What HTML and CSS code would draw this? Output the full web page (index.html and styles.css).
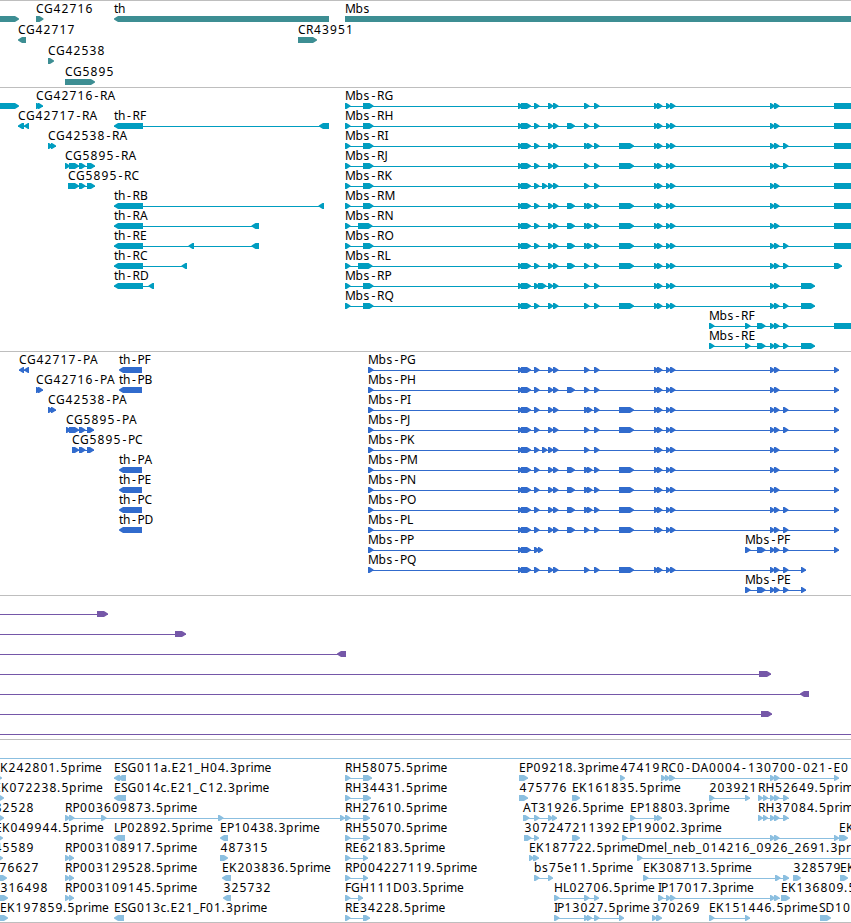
FILE: index.html
```html
<!DOCTYPE html>
<html lang="en">

<head>
    <meta charset="UTF-8">
    <meta name="viewport" content="width=device-width, initial-scale=1.0">
    <title>Genome browser - Mbs / th region</title>
    <link rel="stylesheet" href="styles.css">
</head>

<body>
    <main class="browser">
        <section class="track track-gene" id="gene"></section>
        <section class="track track-rna" id="rna"></section>
        <section class="track track-protein" id="protein"></section>
        <section class="track track-clone" id="clone"></section>
        <section class="track track-est" id="est"></section>
    </main>
    <script src="script.js"></script>
</body>

</html>
```

FILE: styles.css
```css
* {
    box-sizing: border-box;
    margin: 0;
    padding: 0;
}

body {
    background-color: #fff;
    overflow: hidden;
}

.browser {
    display: flex;
    flex-direction: column;
    width: 851px;
    height: 923px;
    border-bottom: 1px solid #bebebe;
}

.track {
    border-top: 1px solid #bebebe;
    overflow: hidden;
}

.track svg {
    display: block;
    width: 100%;
    height: 100%;
}

.track-gene {
    height: 87px;
    color: #3d8e93;
}

.track-rna {
    height: 264px;
    color: #009dc0;
}

.track-protein {
    height: 244px;
    color: #316bcd;
}

.track-clone {
    height: 144px;
    color: #7557a8;
}

.track-est {
    height: 183px;
    color: #8bbfe0;
}

.glyph,
.line {
    fill: currentColor;
}

.line {
    shape-rendering: crispEdges;
}

.label {
    fill: #000;
    font-family: "Noto Sans", "Open Sans", sans-serif;
    font-size: 12px;
    font-kerning: none;
}
```

FILE: script.js
```js
const SVG_NS = 'http://www.w3.org/2000/svg';
const TIP = 5;

// Character advances in pixels, digits are 8
const ADVANCE = {
    A: 8, B: 7.5, C: 8, D: 9, E: 7, F: 6, G: 9, H: 9, I: 3, J: 4, K: 8, L: 6, M: 10.5,
    N: 9, O: 9.5, P: 7, Q: 9.5, R: 7.5, S: 6.5, T: 7, a: 7, b: 8, c: 6, e: 7, h: 7.5,
    i: 3, l: 3, m: 11, n: 8, p: 8, r: 5, s: 6.5, t: 4, '.': 4, '-': 7, _: 6
};

function add(svg, name, attrs) {
    const el = document.createElementNS(SVG_NS, name);
    Object.keys(attrs).forEach((key) => el.setAttribute(key, attrs[key]));
    svg.appendChild(el);
    return el;
}

function drawLabel(svg, text, x, y) {
    let pos = x;
    const xs = [...text].map((ch) => {
        // center the narrow characters inside their cell
        const at = pos + (ch === '-' ? 1.5 : /\d/.test(ch) ? 0.5 : 0);
        pos += ADVANCE[ch] || 8;
        return at;
    });
    add(svg, 'text', { class: 'label', x: xs.join(' '), y: y }).textContent = text;
}

function drawExon(svg, start, end, y, dir) {
    const tip = Math.min(TIP, end - start) - 1;
    let points;
    if (dir === '<') {
        points = [[end, y], [start + tip, y], [start, y + 2.5], [start, y + 3.5], [start + tip, y + 6], [end, y + 6]];
    } else {
        points = [[start, y], [end - tip, y], [end, y + 2.5], [end, y + 3.5], [end - tip, y + 6], [start, y + 6]];
    }
    add(svg, 'polygon', { class: 'glyph', points: points.join(' ') });
}

// feature: [row, label, label x, direction, "start:end start:end ..."]
function drawTrack(id, options, features) {
    const svg = add(document.getElementById(id), 'svg', {});
    features.forEach(([row, label, x, dir, parts]) => {
        const top = options.top + row * options.pitch;
        const exons = parts.split(' ').map((part) => part.split(':').map(Number));
        const first = exons[0][0];
        const last = exons[exons.length - 1][1];
        if (exons.length > 1) {
            add(svg, 'rect', { class: 'line', x: first, y: top + 3, width: last - first, height: 1 });
        }
        exons.filter(([start, end]) => end > start).forEach(([start, end]) => drawExon(svg, start, end, top, dir));
        if (label) {
            drawLabel(svg, label, x, top - 3);
        }
    });
    return svg;
}

// Mbs exons shared by transcripts and proteins
const HEAD = '518:523 521:531 534:539.5';
const PAIR = '548:553.5 553:558.5';
const MID = '584:589.5 594:599.5';
const MID2 = '584:589.5 587:592.5 594:599.5';
const E7 = '567:575';
const BIG = '619:634';
const QUAD = '654:659 657:662.5 666:671 670:675.5';
const TAIL = '770:775 774:779.5';
const TAIL3 = TAIL + ' 783:788.5';

const MBS = {
    G: [HEAD, PAIR, MID, QUAD, TAIL],
    H: [HEAD, PAIR, E7, MID, QUAD, TAIL],
    I: [HEAD, PAIR, MID2, BIG, QUAD, TAIL3],
    J: [HEAD, PAIR, MID, BIG, QUAD, TAIL3],
    K: [HEAD, '542:547.5', PAIR, MID, QUAD, TAIL],
    M: [HEAD, PAIR, E7, MID2, BIG, QUAD, TAIL],
    N: [HEAD, PAIR, E7, MID2, BIG, QUAD, TAIL],
    O: [HEAD, PAIR, E7, MID2, BIG, QUAD, TAIL3],
    L: [HEAD, PAIR, E7, MID, BIG, QUAD, TAIL3],
    P: [HEAD, '538:546.5', PAIR, MID, QUAD, TAIL],
    Q: [HEAD, PAIR, MID, BIG, QUAD, TAIL3]
};
const names = Object.keys(MBS);

const mbsRna = names.map((name, row) => {
    const start = 'NL'.includes(name) ? '358:372.5' : '363:373.5';
    let end = '834:870';
    if (name === 'L') end = '834:842';
    if ('PQ'.includes(name)) end = '801:815';
    return [row, 'Mbs-R' + name, 345, '>', ['345:350.5', start, ...MBS[name], end].join(' ')];
});

const mbsProtein = names.map((name, row) => {
    let parts = ['368:373.5', ...MBS[name], name === 'Q' ? '801:806' : '834:839'];
    if (name === 'P') parts = ['368:373.5', HEAD, '538:543'];
    return [row, 'Mbs-P' + name, 368, '>', parts.join(' ')];
});

drawTrack('gene', { top: 15, pitch: 21 }, [
    [0, '', 0, '>', '-10:19'],
    [0, 'CG42716', 36, '>', '36:43.5'],
    [0, 'th', 114, '<', '114:329'],
    [0, 'Mbs', 345, '>', '345:870'],
    [1, 'CG42717', 18, '<', '18:26'],
    [1, 'CR43951', 298, '>', '298:317'],
    [2, 'CG42538', 48, '>', '48:54'],
    [3, 'CG5895', 65, '>', '65:95']
]);

drawTrack('rna', { top: 15, pitch: 20 }, [
    [0, '', 0, '>', '-10:19'],
    [0, 'CG42716-RA', 36, '>', '36:41 38:43'],
    [1, 'CG42717-RA', 18, '<', '18:24 24:29'],
    [1, 'th-RF', 114, '<', '114:143 319:329'],
    [2, 'CG42538-RA', 48, '>', '48:53 51:56'],
    [3, 'CG5895-RA', 65, '>', '65:70 69:79 79:85.5 87:95'],
    [4, 'CG5895-RC', 68, '>', '68:79 79:85.5 87:95'],
    [5, 'th-RB', 114, '<', '114:143 318.5:324'],
    [6, 'th-RA', 114, '<', '114:143 251.5:259'],
    [7, 'th-RE', 114, '<', '114:143 188.5:194 251.5:259'],
    [8, 'th-RC', 114, '<', '114:143 181.5:187'],
    [9, 'th-RD', 114, '<', '114:143 148.5:154'],
    ...mbsRna,
    [11, 'Mbs-RF', 709, '>', '709:714.5 745:750.5 757:765.5 ' + TAIL3 + ' 834:870'],
    [12, 'Mbs-RE', 709, '>', '709:714.5 745:750.5 757:765.5 ' + TAIL3 + ' 801:815']
]);

drawTrack('protein', { top: 15, pitch: 20 }, [
    [0, 'CG42717-PA', 19, '<', '19:24 24:29'],
    [1, 'CG42716-PA', 36, '>', '36:41 38:43'],
    [2, 'CG42538-PA', 48, '>', '48:53 51:56'],
    [3, 'CG5895-PA', 66, '>', '66:71 69:79 79:85.5 87:94'],
    [4, 'CG5895-PC', 72, '>', '72:79 79:85.5 87:94'],
    [0, 'th-PF', 119, '<', '119:142'],
    [1, 'th-PB', 119, '<', '119:142'],
    [5, 'th-PA', 119, '<', '119:142'],
    [6, 'th-PE', 119, '<', '119:142'],
    [7, 'th-PC', 119, '<', '119:142'],
    [8, 'th-PD', 119, '<', '119:142'],
    ...mbsProtein,
    [9, 'Mbs-PF', 745, '>', '745:750.5 757:765.5 ' + TAIL3 + ' 834:839'],
    [11, 'Mbs-PE', 745, '>', '745:750.5 757:765.5 ' + TAIL3 + ' 801:806']
]);

drawTrack('clone', { top: 15, pitch: 20 }, [
    [0, '', 0, '>', '-10:-10 97:108'],
    [1, '', 0, '>', '-10:-10 175:186'],
    [2, '', 0, '<', '-10:-10 337:346'],
    [3, '', 0, '>', '-10:-10 759:771'],
    [4, '', 0, '<', '-10:-10 800:809'],
    [5, '', 0, '>', '-10:-10 761:772'],
    [6, '', 0, '>', '-10:-10 870:870']
]);

const est = drawTrack('est', { top: 35, pitch: 20 }, [
    [0, 'EK242801.5prime', -7, '>', '-8:2'],
    [0, 'ESG011a.E21_H04.3prime', 114, '<', '114:120 118:126'],
    [0, 'RH58075.5prime', 345, '>', '345:350.5 363:372'],
    [0, 'EP09218.3prime', 519, '>', '519:525 521:528'],
    [0, '47419', 620, '>', '620:625'],
    [0, 'RC0-DA0004-130700-021-E0', 661, '>', '661:666 665:670 669:675 ' + TAIL + ' 834:839'],
    [1, 'EK072238.5prime', -6, '>', '-8:4'],
    [1, 'ESG014c.E21_C12.3prime', 114, '<', '114:126'],
    [1, 'RH34431.5prime', 345, '>', '345:350.5 363:371'],
    [1, '475776', 519, '>', '519:525 521:528'],
    [1, 'EK161835.5prime', 572, '>', '572:580'],
    [1, '203921', 709, '>', '709:714.5 745:750'],
    [1, 'RH52649.5prime', 758, '>', '758:763 763:768 ' + TAIL3],
    [2, '82528', -6, '>', '-8:4'],
    [2, 'RP003609873.5prime', 65, '>', '65:70 69:74.5 101:106.5 218:223.5 340:345'],
    [2, 'RH27610.5prime', 345, '>', '345:350.5 363:370'],
    [2, 'AT31926.5prime', 523, '>', '523:529.5 534:539.5 548:553 552:557'],
    [2, 'EP18803.3prime', 630, '>', '630:635.5 654:659 657:662'],
    [2, 'RH37084.5prime', 758, '>', '758:763 763:768 ' + TAIL3],
    [3, 'EK049944.5prime', -5, '>', '-8:3'],
    [3, 'LP02892.5prime', 114, '<', '114:125'],
    [3, 'EP10438.3prime', 220, '<', '220:228'],
    [3, 'RH55070.5prime', 345, '>', '345:350.5 363:370'],
    [3, '307247', 524, '>', '524:531.5 534:539'],
    [3, '211392', 572, '>', '572:580'],
    [3, 'EP19002.3prime', 622, '>', '622:627.5 ' + TAIL + ' 834:839'],
    [3, 'EK', 839, '>', '839:848'],
    [4, '45589', -6, '>', '-8:3'],
    [4, 'RP003108917.5prime', 65, '>', '65:70 69:74'],
    [4, '487315', 220, '>', '220:228'],
    [4, 'RE62183.5prime', 345, '>', '345:350.5 363:368'],
    [4, 'EK187722.5prime', 529, '>', '529:534 533:539'],
    [4, 'Dmel_neb_014216_0926_2691.3prime', 637, '>', '637:642.5 870:875'],
    [5, '76627', -1, '>', '-8:7'],
    [5, 'RP003129528.5prime', 65, '>', '65:70 69:74'],
    [5, 'EK203836.5prime', 222, '<', '222:231'],
    [5, 'RP004227119.5prime', 345, '>', '345:350.5 363:368'],
    [5, 'bs75e11.5prime', 534, '>', '534:539.5 548:553'],
    [5, 'EK308713.5prime', 643, '>', '643:648.5 775:780.5 783:789'],
    [5, '328579', 793, '>', '793:801'],
    [5, 'EK', 840, '>', '840:848'],
    [6, '316498', 0, '>', '-2:8'],
    [6, 'RP003109145.5prime', 65, '>', '65:70 69:74'],
    [6, '325732', 223, '<', '223:231'],
    [6, 'FGH111D03.5prime', 345, '>', '345:350.5 358:363'],
    [6, 'HL02706.5prime', 554, '>', '554:559.5 584:589.5 594:599'],
    [6, 'IP17017.3prime', 658, '>', '658:663.5 666:671 670:675.5 ' + TAIL],
    [6, 'EK136809.5prime', 781, '>', '781:790'],
    [7, 'EK197859.5prime', 0, '>', '0:8'],
    [7, 'ESG013c.E21_F01.3prime', 114, '<', '114:124'],
    [7, 'RE34228.5prime', 345, '>', '345:350.5 363:370'],
    [7, 'IP13027.5prime', 554, '>', '554:559.5 584:589 587:592 594:599.5 619:624'],
    [7, '370269', 652, '>', '652:657 656:662'],
    [7, 'EK151446.5prime', 709, '>', '709:714.5 745:750'],
    [7, 'SD10', 819, '>', '820:831']
]);

// merged alignment running across the whole view
add(est, 'rect', { class: 'line', x: 0, y: 18, width: 851, height: 1 });
```
